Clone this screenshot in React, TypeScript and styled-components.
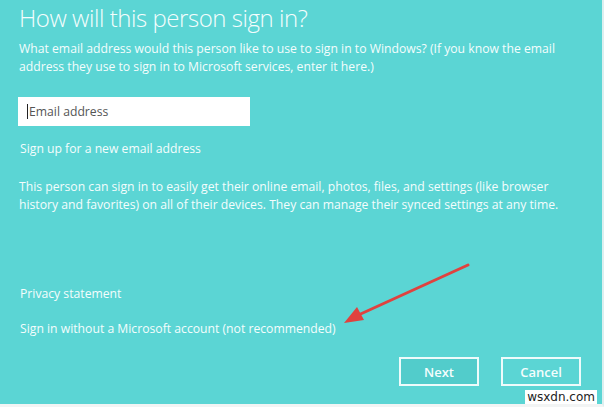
import { FunctionComponent } from "react";
import styled, { createGlobalStyle } from "styled-components";

const GlobalStyle = createGlobalStyle`
    html, body {
        margin: 0;
        padding: 0;
        background: #ffffff;
    }
    * {
        box-sizing: border-box;
    }
`;

const Dialog = styled.div`
    position: relative;
    width: 604px;
    height: 407px;
    background-color: #5bd5d4;
    border-right: 2px solid #dcefef;
    border-bottom: 3px solid #f2f4f4;
    padding: 0 20px 0 19px;
    display: flex;
    flex-direction: column;
    font-family: "Open Sans", "Noto Sans", sans-serif;
    color: #f4fdfd;
`;

const Title = styled.h1`
    margin: 1px 0 0;
    font-size: 24px;
    line-height: 34px;
    font-weight: 300;
    letter-spacing: -0.45px;
`;

const Paragraph = styled.p`
    margin: 0;
    font-size: 12.2px;
    line-height: 18px;
    font-weight: 400;
`;

const IntroParagraph = styled(Paragraph)`
    margin-top: 5px;
`;

const EmailField = styled.label`
    margin-top: 21px;
    margin-left: -1px;
    width: 232px;
    height: 29px;
    background: #ffffff;
    display: flex;
    align-items: center;
    padding-left: 9px;
`;

const Caret = styled.span`
    width: 1px;
    height: 15px;
    background: #222222;
`;

const EmailInput = styled.input`
    border: none;
    outline: none;
    padding: 0 0 0 1px;
    width: 200px;
    font-family: "Open Sans", "Noto Sans", sans-serif;
    font-size: 12.2px;
    color: #333333;
    background: transparent;

    &::placeholder {
        color: #555555;
    }
`;

const TextLink = styled.a<{ $gap: number }>`
    display: block;
    margin-top: ${(p) => p.$gap}px;
    margin-left: 1px;
    font-size: 12.2px;
    line-height: 18px;
    color: #f4fdfd;
    text-decoration: none;
    cursor: pointer;
`;

const DetailsParagraph = styled(Paragraph)`
    margin-top: 20px;
`;

const Footer = styled.div`
    margin-top: 19px;
    display: flex;
    justify-content: flex-end;
    gap: 22px;
    padding-right: 1px;
`;

const Button = styled.button<{ $primary?: boolean }>`
    width: 80px;
    height: 29px;
    border: 2px solid #eefbfb;
    background: ${(p) => (p.$primary ? "#52cccb" : "transparent")};
    color: #f4fdfd;
    font-family: "Open Sans", "Noto Sans", sans-serif;
    font-size: 13px;
    font-weight: 600;
    padding: 0;
    cursor: pointer;
`;

const Annotation = styled.svg`
    position: absolute;
    left: 340px;
    top: 260px;
    width: 135px;
    height: 70px;
    pointer-events: none;
`;

const Watermark = styled.div`
    position: absolute;
    right: 5px;
    bottom: 0;
    background: #ffffff;
    padding: 0 2px;
    font-family: "DejaVu Sans", "Liberation Sans", sans-serif;
    font-size: 12px;
    line-height: 14px;
    color: #222222;
`;

const App: FunctionComponent = () => {
    return (
        <>
            <GlobalStyle />
            <Dialog>
                <Title>How will this person sign in?</Title>
                <IntroParagraph>
                    What email address would this person like to use to sign
                    in to Windows? (If you know the email address they use to
                    sign in to Microsoft services, enter it here.)
                </IntroParagraph>
                <EmailField>
                    <Caret />
                    <EmailInput placeholder="Email address" />
                </EmailField>
                <TextLink $gap={14}>Sign up for a new email address</TextLink>
                <DetailsParagraph>
                    This person can sign in to easily get their online email,
                    photos, files, and settings (like browser history and
                    favorites) on all of their devices. They can manage their
                    synced settings at any time.
                </DetailsParagraph>
                <TextLink $gap={71}>Privacy statement</TextLink>
                <TextLink $gap={17}>
                    Sign in without a Microsoft account (not recommended)
                </TextLink>
                <Footer>
                    <Button $primary>Next</Button>
                    <Button>Cancel</Button>
                </Footer>
                <Annotation viewBox="0 0 135 70">
                    <line
                        x1="128"
                        y1="5"
                        x2="14"
                        y2="57"
                        stroke="#e0423f"
                        strokeWidth="3"
                        strokeLinecap="round"
                    />
                    <polygon
                        points="4,63 17,47 24,60"
                        fill="#e0423f"
                    />
                </Annotation>
                <Watermark>wsxdn.com</Watermark>
            </Dialog>
        </>
    );
};

export default App;
